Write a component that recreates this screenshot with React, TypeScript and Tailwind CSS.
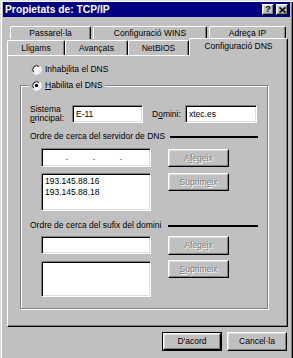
import React from "react";

const raised =
  "border border-t-white border-l-white border-r-black border-b-black shadow-[inset_-1px_-1px_0_#808080,inset_1px_1px_0_#dfdfdf] bg-[#c0c0c0]";
const sunken =
  "border border-t-[#808080] border-l-[#808080] border-r-white border-b-white shadow-[inset_1px_1px_0_#000,inset_-1px_-1px_0_#dfdfdf] bg-white";
const disabledText = "text-[#808080] [text-shadow:1px_1px_0_#fff]";

function Radio({ checked }: { checked?: boolean }) {
  return (
    <svg width="11" height="11" viewBox="0 0 12 12" className="shrink-0">
      <circle cx="6" cy="6" r="5.5" fill="#fff" />
      <path d="M2.46 9.54 A5 5 0 0 1 9.54 2.46" stroke="#808080" strokeWidth="1" fill="none" />
      <path d="M3.17 8.83 A4 4 0 0 1 8.83 3.17" stroke="#000" strokeWidth="1" fill="none" />
      <path d="M9.54 2.46 A5 5 0 0 1 2.46 9.54" stroke="#fff" strokeWidth="1" fill="none" />
      <path d="M8.83 3.17 A4 4 0 0 1 3.17 8.83" stroke="#dfdfdf" strokeWidth="1" fill="none" />
      {checked && <circle cx="6" cy="6" r="1.8" fill="#000" />}
    </svg>
  );
}

export default function App() {
  return (
    <div className="w-[293px] h-[358px] bg-[#c0c0c0] overflow-hidden font-['Liberation_Sans',Arial,sans-serif] text-[8.5px] leading-[11px] text-black shadow-[inset_1px_1px_0_#dfdfdf,inset_2px_2px_0_#fff,inset_-1px_0_0_#000,inset_-2px_0_0_#808080] flex flex-col">
      {/* Title bar */}
      <div className="mx-[3px] mt-[2px] h-[15px] bg-[#000080] flex items-center justify-between pl-[2px] pr-[2px]">
        <span className="text-white font-bold text-[10.3px] leading-[15px]">Propietats de: TCP/IP</span>
        <div className="flex gap-[2px]">
          <div className={`w-[12px] h-[11px] flex items-center justify-center ${raised}`}>
            <span className="font-bold text-[9px] leading-[9px]">?</span>
          </div>
          <div className={`w-[12px] h-[11px] flex items-center justify-center ${raised}`}>
            <svg width="7" height="6" viewBox="0 0 7 6">
              <path d="M0.5 0.5 L6.5 5.5 M6.5 0.5 L0.5 5.5" stroke="#000" strokeWidth="1.6" />
            </svg>
          </div>
        </div>
      </div>

      {/* Tabs top row */}
      <div className="mt-[9px] ml-[10px] h-[13px] flex">
        <div className="w-[81px] h-full flex justify-center pt-[1px] border-t border-l border-t-white border-l-white border-r border-r-black rounded-tl-[2px] rounded-tr-[2px] shadow-[inset_-1px_0_0_#808080]">
          Passarel·la
        </div>
        <div className="ml-[2px] w-[114px] h-full flex justify-center pt-[1px] border-t border-l border-t-white border-l-white border-r border-r-black rounded-tl-[2px] rounded-tr-[2px] shadow-[inset_-1px_0_0_#808080]">
          Configuració WINS
        </div>
        <div className="ml-[2px] w-[77px] h-full flex justify-center pt-[1px] border-t border-l border-t-white border-l-white border-r border-r-black rounded-tl-[2px] rounded-tr-[2px] shadow-[inset_-1px_0_0_#808080]">
          Adreça IP
        </div>
      </div>

      {/* Tabs bottom row */}
      <div className="ml-[7px] h-[16px] flex">
        <div className="mt-[1px] w-[58px] h-[15px] flex justify-center pt-[2px] border-t border-l border-t-white border-l-white border-r border-r-black rounded-tl-[2px] rounded-tr-[2px] shadow-[inset_-1px_0_0_#808080]">
          Lligams
        </div>
        <div className="mt-[1px] w-[63px] h-[15px] flex justify-center pt-[2px] border-t border-l border-t-white border-l-white border-r border-r-black rounded-tl-[2px] rounded-tr-[2px] shadow-[inset_-1px_0_0_#808080]">
          Avançats
        </div>
        <div className="mt-[1px] w-[61px] h-[15px] flex justify-center pt-[2px] border-t border-l border-t-white border-l-white border-r border-r-black rounded-tl-[2px] rounded-tr-[2px] shadow-[inset_-1px_0_0_#808080]">
          NetBIOS
        </div>
        <div className="relative z-10 -mt-[1px] w-[99px] h-[18px] bg-[#c0c0c0] flex justify-center pt-[2px] border-t border-l border-t-white border-l-white border-r border-r-black rounded-tl-[2px] rounded-tr-[2px] shadow-[inset_-1px_0_0_#808080]">
          Configuració DNS
        </div>
      </div>

      {/* Panel */}
      <div className="ml-[7px] w-[281px] h-[272px] shrink-0 border-t border-l border-t-white border-l-white border-r border-b border-r-black border-b-black shadow-[inset_-1px_-1px_0_#808080] pl-[12px] pt-[7px]">
        <div className="h-[12px] ml-[11px] flex items-center gap-[3px]">
          <Radio />
          <span>
            Inhab<u>i</u>lita el DNS
          </span>
        </div>

        <div className="relative mt-[10px] w-[248px] h-[224px] border border-[#808080] shadow-[inset_1px_1px_0_#fff,1px_1px_0_#fff] pt-[19px] pl-[9px] pr-[9px]">
          <div className="absolute -top-[7px] left-[8px] h-[12px] px-[2px] bg-[#c0c0c0] flex items-center gap-[3px]">
            <Radio checked />
            <span>
              <u>H</u>abilita el DNS
            </span>
          </div>

          {/* Row: host / domain */}
          <div className="h-[18px] flex items-center">
            <div className="w-[42px] h-[18px] flex flex-col">
              <span className="h-[9px] leading-[9px]">Sistema</span>
              <span className="h-[9px] leading-[9px]">
                <u>p</u>rincipal:
              </span>
            </div>
            <div className={`w-[71px] h-[18px] ${sunken} pl-[3px] flex items-center`}>E-11</div>
            <span className="ml-[9px] w-[33px]">
              D<u>o</u>mini:
            </span>
            <div className={`w-[72px] h-[18px] ${sunken} pl-[3px] flex items-center`}>xtec.es</div>
          </div>

          {/* Heading 1 */}
          <div className="mt-[8px] h-[11px] flex items-center justify-between">
            <span>Ordre de cerca del servidor de DNS</span>
            <div className="w-[88px] h-[2px] bg-black" />
          </div>

          <div className="mt-[6px] flex items-start">
            <div className={`ml-[11px] w-[110px] h-[19px] ${sunken} flex items-center`}>
              <div className="w-[23px]" />
              <span className="w-[4px] text-center">.</span>
              <div className="w-[23px]" />
              <span className="w-[4px] text-center">.</span>
              <div className="w-[23px]" />
              <span className="w-[4px] text-center">.</span>
            </div>
            <div className={`ml-[17px] mt-[1px] w-[61px] h-[18px] ${raised} flex items-center justify-center ${disabledText}`}>
              A<u>f</u>egeix
            </div>
          </div>

          <div className="mt-[6px] flex items-start">
            <div className={`ml-[11px] w-[110px] h-[38px] ${sunken} pl-[3px] pt-[2px] flex flex-col`}>
              <span>193.145.88.16</span>
              <span>193.145.88.18</span>
            </div>
            <div className={`ml-[17px] w-[61px] h-[18px] ${raised} flex items-center justify-center ${disabledText}`}>
              Suprim<u>e</u>ix
            </div>
          </div>

          {/* Heading 2 */}
          <div className="mt-[9px] h-[11px] flex items-center justify-between">
            <span>Ordre de cerca del sufix del domini</span>
            <div className="w-[90px] h-[2px] bg-black" />
          </div>

          <div className="mt-[5px] flex items-start">
            <div className={`ml-[11px] w-[110px] h-[18px] ${sunken}`} />
            <div className={`ml-[17px] w-[61px] h-[19px] ${raised} flex items-center justify-center ${disabledText}`}>
              Afege<u>i</u>x
            </div>
          </div>

          <div className="mt-[6px] flex items-start">
            <div className={`ml-[11px] w-[110px] h-[36px] ${sunken}`} />
            <div className={`ml-[17px] -mt-[1px] w-[61px] h-[18px] ${raised} flex items-center justify-center ${disabledText}`}>
              <u>S</u>uprimeix
            </div>
          </div>
        </div>
      </div>

      {/* Bottom buttons */}
      <div className="mt-[5px] pr-[6px] flex justify-end gap-[5px]">
        <div className="w-[60px] h-[19px] border border-black">
          <div className={`w-full h-full ${raised} flex items-center justify-center`}>D'acord</div>
        </div>
        <div className={`w-[60px] h-[19px] ${raised} flex items-center justify-center`}>Cancel·la</div>
      </div>
    </div>
  );
}
